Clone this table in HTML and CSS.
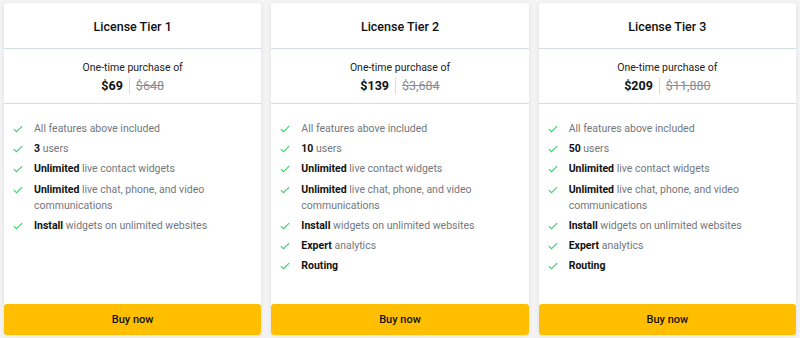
FILE: index.html
```html
<!DOCTYPE html>
<html lang="en">
<head>
  <meta charset="UTF-8" />
  <title>License Tiers</title>
  <link rel="stylesheet" href="styles.css">
</head>
<body>
  <main class="tiers">
    <section class="tier">
      <h2 class="tier-title">License Tier 1</h2>
      <div class="tier-price">
        <div class="price-label">One-time purchase of</div>
        <div class="price-row"><span class="price-now">$69</span><span class="price-old">$648</span></div>
      </div>
      <ul class="features">
        <li><svg class="check" viewBox="0 0 12 9"><path d="M1 4.6l3.2 3.1L11 1"/></svg><span>All features above included</span></li>
        <li><svg class="check" viewBox="0 0 12 9"><path d="M1 4.6l3.2 3.1L11 1"/></svg><span><b>3</b> users</span></li>
        <li><svg class="check" viewBox="0 0 12 9"><path d="M1 4.6l3.2 3.1L11 1"/></svg><span><b>Unlimited</b> live contact widgets</span></li>
        <li><svg class="check" viewBox="0 0 12 9"><path d="M1 4.6l3.2 3.1L11 1"/></svg><span><b>Unlimited</b> live chat, phone, and video communications</span></li>
        <li><svg class="check" viewBox="0 0 12 9"><path d="M1 4.6l3.2 3.1L11 1"/></svg><span><b>Install</b> widgets on unlimited websites</span></li>
      </ul>
      <button class="buy">Buy now</button>
    </section>

    <section class="tier">
      <h2 class="tier-title">License Tier 2</h2>
      <div class="tier-price">
        <div class="price-label">One-time purchase of</div>
        <div class="price-row"><span class="price-now">$139</span><span class="price-old">$3,684</span></div>
      </div>
      <ul class="features">
        <li><svg class="check" viewBox="0 0 12 9"><path d="M1 4.6l3.2 3.1L11 1"/></svg><span>All features above included</span></li>
        <li><svg class="check" viewBox="0 0 12 9"><path d="M1 4.6l3.2 3.1L11 1"/></svg><span><b>10</b> users</span></li>
        <li><svg class="check" viewBox="0 0 12 9"><path d="M1 4.6l3.2 3.1L11 1"/></svg><span><b>Unlimited</b> live contact widgets</span></li>
        <li><svg class="check" viewBox="0 0 12 9"><path d="M1 4.6l3.2 3.1L11 1"/></svg><span><b>Unlimited</b> live chat, phone, and video communications</span></li>
        <li><svg class="check" viewBox="0 0 12 9"><path d="M1 4.6l3.2 3.1L11 1"/></svg><span><b>Install</b> widgets on unlimited websites</span></li>
        <li><svg class="check" viewBox="0 0 12 9"><path d="M1 4.6l3.2 3.1L11 1"/></svg><span><b>Expert</b> analytics</span></li>
        <li><svg class="check" viewBox="0 0 12 9"><path d="M1 4.6l3.2 3.1L11 1"/></svg><span><b>Routing</b></span></li>
      </ul>
      <button class="buy">Buy now</button>
    </section>

    <section class="tier">
      <h2 class="tier-title">License Tier 3</h2>
      <div class="tier-price">
        <div class="price-label">One-time purchase of</div>
        <div class="price-row"><span class="price-now">$209</span><span class="price-old">$11,880</span></div>
      </div>
      <ul class="features">
        <li><svg class="check" viewBox="0 0 12 9"><path d="M1 4.6l3.2 3.1L11 1"/></svg><span>All features above included</span></li>
        <li><svg class="check" viewBox="0 0 12 9"><path d="M1 4.6l3.2 3.1L11 1"/></svg><span><b>50</b> users</span></li>
        <li><svg class="check" viewBox="0 0 12 9"><path d="M1 4.6l3.2 3.1L11 1"/></svg><span><b>Unlimited</b> live contact widgets</span></li>
        <li><svg class="check" viewBox="0 0 12 9"><path d="M1 4.6l3.2 3.1L11 1"/></svg><span><b>Unlimited</b> live chat, phone, and video communications</span></li>
        <li><svg class="check" viewBox="0 0 12 9"><path d="M1 4.6l3.2 3.1L11 1"/></svg><span><b>Install</b> widgets on unlimited websites</span></li>
        <li><svg class="check" viewBox="0 0 12 9"><path d="M1 4.6l3.2 3.1L11 1"/></svg><span><b>Expert</b> analytics</span></li>
        <li><svg class="check" viewBox="0 0 12 9"><path d="M1 4.6l3.2 3.1L11 1"/></svg><span><b>Routing</b></span></li>
      </ul>
      <button class="buy">Buy now</button>
    </section>
  </main>
</body>
</html>
```

FILE: styles.css
```css
:root {
  --page-bg: #f3f3f3;
  --card-bg: #fff;
  --divider: #d6dce6;
  --text-dark: #111;
  --text-muted: #73777e;
  --check: #3ccf6e;
  --buy-bg: #ffbe00;
}

body {
  margin: 0;
  background: var(--page-bg);
  font-family: Roboto, 'Liberation Sans', sans-serif;
  color: var(--text-dark);
}

.tiers {
  display: grid;
  grid-template-columns: repeat(3, 1fr);
  gap: 10px;
  padding: 3px 4px;
  height: 332px;
}

.tier {
  display: flex;
  flex-direction: column;
  background: var(--card-bg);
  border-radius: 3px;
  box-shadow: 0 1px 4px rgba(0,0,0,0.08);
}

.tier-title {
  margin: 0;
  height: 43px;
  padding-top: 2px;
  line-height: 43px;
  text-align: center;
  font-size: 12.5px;
  font-weight: 500;
  border-bottom: 1px solid var(--divider);
}

.tier-price {
  height: 55px;
  padding-top: 12px;
  box-sizing: border-box;
  text-align: center;
  border-bottom: 1px solid var(--divider);
}

.price-label {
  font-size: 10.5px;
  line-height: 14px;
  color: #222;
}

.price-row {
  display: flex;
  justify-content: center;
  align-items: center;
  margin-top: 2px;
  font-size: 12.5px;
  line-height: 17px;
}

.price-now {
  font-weight: 700;
  padding-right: 6px;
  border-right: 1px solid var(--divider);
}

.price-old {
  padding-left: 6px;
  color: #8a8e95;
  text-decoration: line-through;
}

.features {
  list-style: none;
  margin: 0;
  padding: 17px 10px 0 9px;
  flex: 1;
}

.features li {
  display: flex;
  align-items: flex-start;
  font-size: 10.5px;
  line-height: 16px;
  color: var(--text-muted);
  margin-bottom: 4.2px;
}

.features b {
  color: var(--text-dark);
  font-weight: 700;
}

.check {
  flex: none;
  width: 10px;
  height: 8px;
  margin: 4px 11px 0 0;
  fill: none;
  stroke: var(--check);
  stroke-width: 1.3;
}

.buy {
  height: 31px;
  margin: 0;
  border: none;
  border-radius: 3px;
  background: var(--buy-bg);
  color: var(--text-dark);
  font-family: Roboto, 'Liberation Sans', sans-serif;
  font-size: 11px;
  font-weight: 500;
  cursor: pointer;
}
```
